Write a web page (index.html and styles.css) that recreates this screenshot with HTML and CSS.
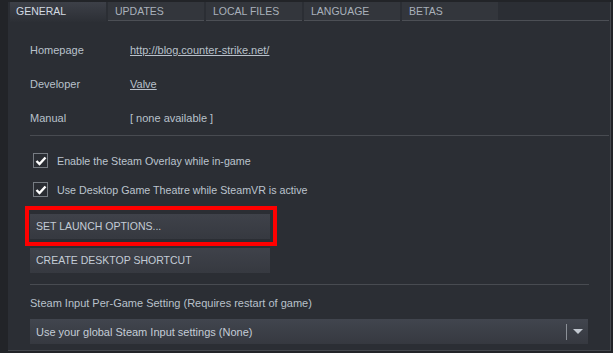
FILE: index.html
```html
<!DOCTYPE html>
<html lang="en">
<head>
    <meta charset="UTF-8">
    <title>Properties - General</title>
    <link rel="stylesheet" href="styles.css">
</head>
<body>
    <div class="panel">
        <div class="tabs">
            <div class="tab active">GENERAL</div>
            <div class="tab">UPDATES</div>
            <div class="tab">LOCAL FILES</div>
            <div class="tab">LANGUAGE</div>
            <div class="tab">BETAS</div>
            <div class="tab-rest"></div>
        </div>

        <div class="content">
            <div class="info-row">
                <span class="label">Homepage</span>
                <a class="value link" href="#">http://blog.counter-strike.net/</a>
            </div>
            <div class="info-row">
                <span class="label">Developer</span>
                <a class="value link" href="#">Valve</a>
            </div>
            <div class="info-row">
                <span class="label">Manual</span>
                <span class="value">[ none available ]</span>
            </div>
            <div class="sep wide"></div>

            <div class="checks">
                <label class="check-row">
                    <span class="box"><svg width="12" height="10" viewBox="0 0 12 10"><path d="M1.5 5 L4.5 8 L10.5 1.5" fill="none" stroke="#fff" stroke-width="2.4"/></svg></span>
                    Enable the Steam Overlay while in-game
                </label>
                <label class="check-row">
                    <span class="box"><svg width="12" height="10" viewBox="0 0 12 10"><path d="M1.5 5 L4.5 8 L10.5 1.5" fill="none" stroke="#fff" stroke-width="2.4"/></svg></span>
                    Use Desktop Game Theatre while SteamVR is active
                </label>
            </div>

            <div class="buttons">
                <div class="btn highlighted">SET LAUNCH OPTIONS...</div>
                <div class="btn">CREATE DESKTOP SHORTCUT</div>
            </div>

            <div class="sep"></div>

            <div class="input-title">Steam Input Per-Game Setting (Requires restart of game)</div>
            <div class="dropdown">
                <span class="dd-text">Use your global Steam Input settings (None)</span>
                <span class="dd-divider"></span>
                <span class="dd-arrow"></span>
            </div>
        </div>
    </div>
</body>
</html>
```
FILE: styles.css
```css
* {
    margin: 0;
    padding: 0;
    box-sizing: border-box;
}
html, body {
    width: 100%;
    height: 100%;
}
body {
    background-color: #222428;
    font-family: "Liberation Sans", Arial, sans-serif;
    font-size: 11px;
    color: #b9c1cb;
    overflow: hidden;
}

.panel {
    margin: 2px 2px 0 8px;
    height: 349px;
    background-color: #2b2e34;
    border-right: 1px solid #45484e;
    border-bottom: 1px solid #45484e;
}

.tabs {
    display: flex;
    height: 20px;
    padding-left: 2px;
    gap: 2px;
    font-size: 10.5px;
}
.tab {
    width: 96px;
    height: 19px;
    padding: 3px 0 0 7px;
    background-color: #33363c;
    color: #a9b1bb;
    border-bottom: 1px solid #4c4f55;
}
.tab.active {
    height: 20px;
    background: linear-gradient(#3d4048, #2c2f35);
    color: #d3dae3;
    border-bottom: none;
    padding-left: 6px;
}
.tab-rest {
    flex-grow: 1;
    height: 19px;
    margin-left: -2px;
    margin-right: 1px;
    border-bottom: 1px solid #4c4f55;
}

.content {
    padding: 11px 0 0 22px;
}

.info-row {
    display: flex;
    align-items: center;
    height: 34px;
}
.label {
    width: 100px;
}
.value {
    color: #b9c1cb;
}
.link {
    color: #b9c1cb;
    text-decoration: underline;
}

.sep {
    height: 1px;
    margin-right: 21px;
    background-color: #484b51;
}
.sep.wide {
    margin-right: 1px;
}

.checks {
    padding-top: 10px;
    font-size: 10.7px;
    color: #bcc4ce;
}
.check-row {
    display: flex;
    align-items: center;
    height: 29px;
    padding-left: 3px;
}
.box {
    display: flex;
    align-items: center;
    justify-content: center;
    width: 15px;
    height: 15px;
    margin-right: 9px;
    border: 1px solid #777c83;
    background-color: #2a2d33;
}

.buttons {
    display: flex;
    flex-direction: column;
    gap: 9px;
    padding: 10px 0 11px;
}
.btn {
    position: relative;
    width: 240px;
    height: 25px;
    padding-left: 6px;
    line-height: 25px;
    background: linear-gradient(#3f424a, #363940);
    color: #c4ccd6;
    font-size: 10.5px;
}
.btn.highlighted::after {
    content: "";
    position: absolute;
    top: -8px;
    left: -5px;
    right: -7px;
    bottom: -7px;
    border: 4px solid #ff0000;
}

.input-title {
    height: 34px;
    line-height: 36px;
}
.dropdown {
    display: flex;
    align-items: center;
    width: 558px;
    height: 25px;
    padding-left: 6px;
    background: linear-gradient(#41454e, #363940);
    color: #c4ccd6;
}
.dd-text {
    flex-grow: 1;
}
.dd-divider {
    width: 1px;
    height: 16px;
    background-color: #8b9097;
    margin-right: 6px;
}
.dd-arrow {
    width: 0;
    height: 0;
    margin-right: 5px;
    border-left: 5px solid transparent;
    border-right: 5px solid transparent;
    border-top: 5px solid #c2c8d0;
}
```
